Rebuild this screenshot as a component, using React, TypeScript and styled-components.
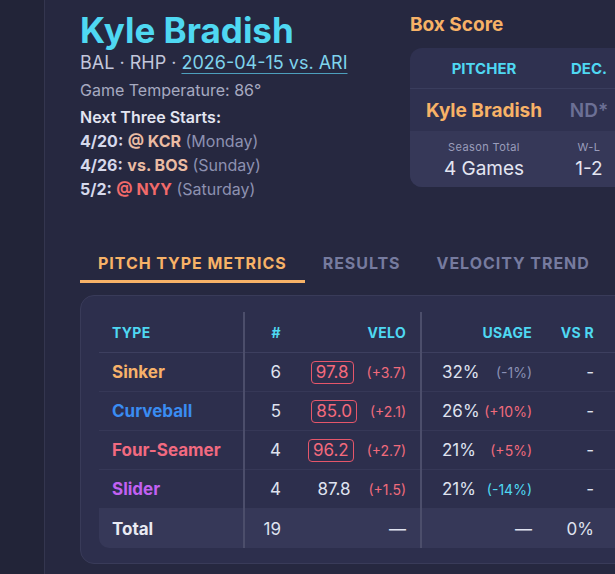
import React from "react";
import styled, { createGlobalStyle } from "styled-components";

const GlobalStyle = createGlobalStyle`
  body {
    margin: 0;
    background: #262840;
    font-family: Inter, "Noto Sans", sans-serif;
    overflow: hidden;
  }
`;

type Tone = "up" | "down" | "flat";

interface PitchRow {
  name: string;
  color: string;
  count: number;
  velo: string;
  veloDelta: string;
  flagged: boolean;
  usage: string;
  usageDelta: string;
  usageTone: Tone;
  vsR: string;
}

const rows: PitchRow[] = [
  { name: "Sinker", color: "#f7b26a", count: 6, velo: "97.8", veloDelta: "(+3.7)", flagged: true, usage: "32%", usageDelta: "(-1%)", usageTone: "flat", vsR: "-" },
  { name: "Curveball", color: "#3a8cf2", count: 5, velo: "85.0", veloDelta: "(+2.1)", flagged: true, usage: "26%", usageDelta: "(+10%)", usageTone: "up", vsR: "-" },
  { name: "Four-Seamer", color: "#f26a80", count: 4, velo: "96.2", veloDelta: "(+2.7)", flagged: true, usage: "21%", usageDelta: "(+5%)", usageTone: "up", vsR: "-" },
  { name: "Slider", color: "#c261f2", count: 4, velo: "87.8", veloDelta: "(+1.5)", flagged: false, usage: "21%", usageDelta: "(-14%)", usageTone: "down", vsR: "-" },
];

const toneColor: Record<Tone, string> = {
  up: "#f06b7c",
  down: "#4fd8f2",
  flat: "#8a8fb4",
};

const App: React.FC = () => {
  return (
    <>
      <GlobalStyle />
      <Shell>
        <Sidebar />
        <Main>
          <Top>
            <Profile>
              <Name>Kyle Bradish</Name>
              <Meta>
                BAL · RHP · <GameLink href="#">2026-04-15 vs. ARI</GameLink>
              </Meta>
              <Temp>Game Temperature: 86°</Temp>
              <NextLabel>Next Three Starts:</NextLabel>
              <StartLine>
                <b>4/20:</b> <Opp>@ KCR</Opp> <Day>(Monday)</Day>
              </StartLine>
              <StartLine>
                <b>4/26:</b> <Opp>vs. BOS</Opp> <Day>(Sunday)</Day>
              </StartLine>
              <StartLine>
                <b>5/2:</b> <Opp $hot>@ NYY</Opp> <Day>(Saturday)</Day>
              </StartLine>
            </Profile>
            <BoxScore>
              <BoxTitle>Box Score</BoxTitle>
              <BoxCard>
                <BoxRow>
                  <BoxHead $w={148}>Pitcher</BoxHead>
                  <BoxHead $w={62}>Dec.</BoxHead>
                </BoxRow>
                <BoxRow $divided>
                  <BoxName $w={148}>Kyle Bradish</BoxName>
                  <BoxDec $w={62}>ND*</BoxDec>
                </BoxRow>
                <BoxFoot>
                  <FootCell $w={148}>
                    <FootLabel>Season Total</FootLabel>
                    <FootValue>4 Games</FootValue>
                  </FootCell>
                  <FootCell $w={62}>
                    <FootLabel>W-L</FootLabel>
                    <FootValue>1-2</FootValue>
                  </FootCell>
                </BoxFoot>
              </BoxCard>
            </BoxScore>
          </Top>

          <Tabs>
            <Tab $active>Pitch Type Metrics</Tab>
            <Tab>Results</Tab>
            <Tab>Velocity Trend</Tab>
          </Tabs>

          <TableCard>
            <Table>
              <colgroup>
                <col style={{ width: 145 }} />
                <col style={{ width: 51 }} />
                <col style={{ width: 126 }} />
                <col style={{ width: 125 }} />
                <col style={{ width: 62 }} />
                <col style={{ width: 90 }} />
              </colgroup>
              <thead>
                <tr>
                  <Th $align="left" $split>Type</Th>
                  <Th>#</Th>
                  <Th $split>Velo</Th>
                  <Th>Usage</Th>
                  <Th>vs R</Th>
                  <Th />
                </tr>
              </thead>
              <tbody>
                {rows.map((r) => (
                  <tr key={r.name}>
                    <TypeCell $color={r.color}>{r.name}</TypeCell>
                    <Td>{r.count}</Td>
                    <Td $split>
                      <VeloWrap>
                        <VeloValue $flagged={r.flagged}>{r.velo}</VeloValue>
                        <Delta $color={toneColor.up}>{r.veloDelta}</Delta>
                      </VeloWrap>
                    </Td>
                    <Td>
                      <UsageWrap>
                        <span>{r.usage}</span>
                        <Delta $color={toneColor[r.usageTone]}>{r.usageDelta}</Delta>
                      </UsageWrap>
                    </Td>
                    <Td>{r.vsR}</Td>
                    <Td />
                  </tr>
                ))}
                <TotalRow>
                  <TypeCell $color="#e9eaf3" $first>Total</TypeCell>
                  <Td>19</Td>
                  <Td $split>—</Td>
                  <Td>—</Td>
                  <Td>0%</Td>
                  <Td />
                </TotalRow>
              </tbody>
            </Table>
          </TableCard>
        </Main>
      </Shell>
    </>
  );
};

const Shell = styled.div`
  display: flex;
  width: 100vw;
  min-height: 100vh;
  overflow: hidden;
`;

const Sidebar = styled.aside`
  width: 44px;
  flex-shrink: 0;
  background: #222438;
  border-right: 1px solid #34364f;
`;

const Main = styled.main`
  flex: 1;
  min-width: 0;
  padding: 10px 0 0 35px;
`;

const Top = styled.div`
  display: flex;
`;

const Profile = styled.section`
  width: 330px;
  flex-shrink: 0;
  display: flex;
  flex-direction: column;
`;

const Name = styled.h1`
  margin: 0;
  font-size: 35px;
  line-height: 40px;
  font-weight: 700;
  color: #4fd8f2;
`;

const Meta = styled.div`
  font-size: 18px;
  line-height: 26px;
  color: #c3c6db;
`;

const GameLink = styled.a`
  color: #7fd3ec;
  text-decoration: underline;
  text-decoration-color: #4d9fbd;
  text-underline-offset: 4px;
`;

const Temp = styled.div`
  margin-top: 2px;
  font-size: 16px;
  line-height: 24px;
  color: #a7aac0;
`;

const NextLabel = styled.div`
  margin-top: 3px;
  font-size: 16px;
  line-height: 24px;
  font-weight: 600;
  color: #e3e5f1;
`;

const StartLine = styled.div`
  font-size: 16px;
  line-height: 24px;
  color: #d5d9ec;

  b {
    font-weight: 700;
  }
`;

const Opp = styled.span<{ $hot?: boolean }>`
  font-weight: 700;
  color: ${({ $hot }) => ($hot ? "#f26a6a" : "#ebbca3")};
`;

const Day = styled.span`
  color: #8d91b1;
`;

const BoxScore = styled.section`
  margin-top: 3px;
  flex-shrink: 0;
`;

const BoxTitle = styled.h2`
  margin: 0;
  font-size: 19px;
  line-height: 24px;
  font-weight: 700;
  color: #f7b267;
`;

const BoxCard = styled.div`
  margin-top: 11px;
  background: #2f3150;
  border-radius: 12px;
  overflow: hidden;
  width: 300px;
`;

const BoxRow = styled.div<{ $divided?: boolean }>`
  display: flex;
  align-items: center;
  height: ${({ $divided }) => ($divided ? "42px" : "40px")};
  border-top: ${({ $divided }) => ($divided ? "1px solid #3a3d5d" : "none")};
`;

const BoxHead = styled.div<{ $w: number }>`
  width: ${({ $w }) => $w}px;
  text-align: center;
  font-size: 15px;
  font-weight: 700;
  text-transform: uppercase;
  color: #4fd8f2;
`;

const BoxName = styled.div<{ $w: number }>`
  width: ${({ $w }) => $w}px;
  text-align: center;
  font-size: 19px;
  font-weight: 700;
  color: #f7b267;
`;

const BoxDec = styled.div<{ $w: number }>`
  width: ${({ $w }) => $w}px;
  text-align: center;
  font-size: 19px;
  font-weight: 600;
  color: #6c7095;
`;

const BoxFoot = styled.div`
  display: flex;
  height: 56px;
  background: #363858;
`;

const FootCell = styled.div<{ $w: number }>`
  width: ${({ $w }) => $w}px;
  display: flex;
  flex-direction: column;
  align-items: center;
  padding-top: 9px;
`;

const FootLabel = styled.div`
  font-size: 11px;
  line-height: 14px;
  letter-spacing: 0.4px;
  color: #9a9dbb;
`;

const FootValue = styled.div`
  margin-top: 4px;
  font-size: 19px;
  line-height: 22px;
  color: #e4e6f2;
`;

const Tabs = styled.nav`
  display: flex;
  margin-top: 44px;
`;

const Tab = styled.div<{ $active?: boolean }>`
  padding: 8px 18px 7px;
  font-size: 16px;
  line-height: 20px;
  font-weight: 700;
  letter-spacing: 0.95px;
  text-transform: uppercase;
  color: ${({ $active }) => ($active ? "#f7b267" : "#767b9f")};
  border-bottom: 3px solid ${({ $active }) => ($active ? "#f7b267" : "transparent")};
`;

const TableCard = styled.div`
  margin-top: 12px;
  width: 720px;
  background: #2d2f4d;
  border: 1px solid #393b59;
  border-radius: 14px;
  padding: 16px 0 15px 18px;
`;

const Table = styled.table`
  border-collapse: collapse;
  table-layout: fixed;
  width: 599px;
  font-size: 17px;
  color: #dfe2ef;
`;

const Th = styled.th<{ $align?: "left" | "right"; $split?: boolean }>`
  height: 40px;
  padding: 0 14px 0 13px;
  text-align: ${({ $align }) => $align ?? "right"};
  font-size: 14px;
  font-weight: 700;
  letter-spacing: 0.3px;
  text-transform: uppercase;
  color: #4fd8f2;
  border-bottom: 1px solid #3d3f5f;
  border-right: ${({ $split }) => ($split ? "2px solid #4c4e6b" : "none")};
`;

const Td = styled.td<{ $split?: boolean }>`
  height: 38px;
  padding: 0 14px 0 13px;
  text-align: right;
  white-space: nowrap;
  border-bottom: 1px solid #363857;
  border-right: ${({ $split }) => ($split ? "2px solid #4c4e6b" : "none")};
`;

const TypeCell = styled.td<{ $color: string; $first?: boolean }>`
  height: 38px;
  padding: 0 13px;
  font-weight: 700;
  color: ${({ $color }) => $color};
  border-bottom: 1px solid #363857;
  border-right: 2px solid #4c4e6b;
  border-bottom-left-radius: ${({ $first }) => ($first ? "10px" : "0")};
`;

const TotalRow = styled.tr`
  background: #363858;

  td {
    border-bottom: none;
    height: 39px;
  }
`;

const VeloWrap = styled.div`
  display: flex;
  justify-content: flex-end;
  align-items: center;
  gap: 13px;
`;

const VeloValue = styled.span<{ $flagged: boolean }>`
  display: inline-block;
  padding: 0 4px;
  line-height: 21px;
  border: 1px solid ${({ $flagged }) => ($flagged ? "#e5566a" : "transparent")};
  border-radius: 4px;
  color: ${({ $flagged }) => ($flagged ? "#f46a7c" : "#dfe2ef")};
`;

const UsageWrap = styled.div`
  display: flex;
  justify-content: space-between;
  align-items: center;
  padding-left: 7px;
`;

const Delta = styled.span<{ $color: string }>`
  font-size: 14px;
  color: ${({ $color }) => $color};
`;

export default App;
